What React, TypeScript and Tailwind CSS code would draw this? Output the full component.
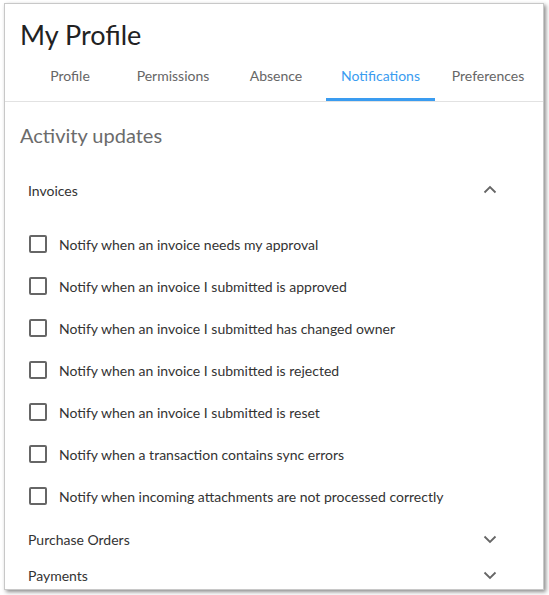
import React from "react";

const tabs = [
  { label: "Profile", width: "w-[100px]" },
  { label: "Permissions", width: "w-[106px]" },
  { label: "Absence", width: "w-[100px]" },
  { label: "Notifications", width: "w-[109px]" },
  { label: "Preferences", width: "w-[106px]" },
];

const invoiceOptions = [
  "Notify when an invoice needs my approval",
  "Notify when an invoice I submitted is approved",
  "Notify when an invoice I submitted has changed owner",
  "Notify when an invoice I submitted is rejected",
  "Notify when an invoice I submitted is reset",
  "Notify when a transaction contains sync errors",
  "Notify when incoming attachments are not processed correctly",
];

function Chevron({ up }: { up?: boolean }) {
  return (
    <svg width="24" height="24" viewBox="0 0 24 24" className="text-[#666]">
      <path
        d={up ? "M6.5 14.5l5.5-5.5 5.5 5.5" : "M6.5 9.5l5.5 5.5 5.5-5.5"}
        fill="none"
        stroke="currentColor"
        strokeWidth="1.8"
      />
    </svg>
  );
}

function SectionHeader({ title, open }: { title: string; open?: boolean }) {
  return (
    <div className="flex h-[36px] items-center justify-between pl-[8px] pr-[26px]">
      <span className="text-[14px] text-[#333]">{title}</span>
      <Chevron up={open} />
    </div>
  );
}

export default function App() {
  return (
    <div className="min-h-[595px] bg-white pl-[4px] pt-[3px] font-['Lato',sans-serif]">
      <div className="h-[587px] w-[540px] overflow-hidden border border-[#c8c8c8] bg-white shadow-[2px_2px_4px_rgba(0,0,0,0.45)]">
        <div className="pl-[15px] pt-[15px]">
          <h1 className="h-[34px] text-[27px] leading-[32px] text-[#222]">My Profile</h1>
          <div className="flex">
            {tabs.map((t) => (
              <div
                key={t.label}
                className={
                  t.label === "Notifications"
                    ? `${t.width} flex h-[48px] shrink-0 items-center justify-center border-b-[3px] border-[#3a9cf0] text-[14px] text-[#3a9cf0]`
                    : `${t.width} flex h-[48px] shrink-0 items-center justify-center border-b-[3px] border-transparent text-[14px] text-[#666]`
                }
              >
                {t.label}
              </div>
            ))}
          </div>
        </div>
        <div className="h-px bg-[#e2e2e2]" />
        <div className="px-[15px]">
          <h2 className="mt-[19px] h-[28px] text-[20px] leading-[28px] text-[#6b6b6b]">Activity updates</h2>
          <div className="mt-[23px]">
            <SectionHeader title="Invoices" open />
            <div className="pb-[4px] pt-[15px]">
              {invoiceOptions.map((o) => (
                <label key={o} className="flex h-[42px] items-center gap-[12px] pl-[9px]">
                  <span className="h-[18px] w-[18px] rounded-[2px] border-2 border-[#666]" />
                  <span className="text-[14px] text-[#333]">{o}</span>
                </label>
              ))}
            </div>
            <SectionHeader title="Purchase Orders" />
            <SectionHeader title="Payments" />
          </div>
        </div>
      </div>
    </div>
  );
}
